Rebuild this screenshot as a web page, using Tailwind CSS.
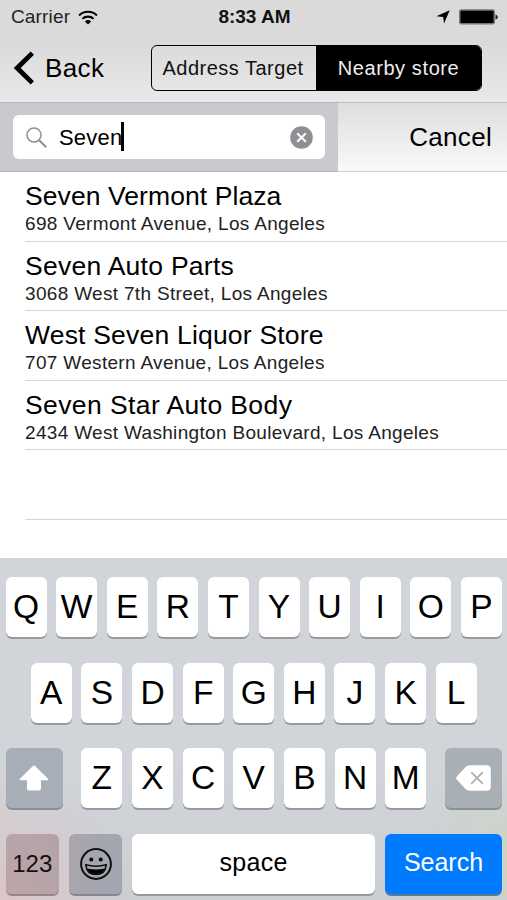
<!DOCTYPE html>
<html lang="en">
<head>
    <meta charset="UTF-8">
    <meta name="viewport" content="width=device-width, initial-scale=1.0">
    <title>Nearby store</title>
    <!-- Tailwind CSS -->
    <script src="https://cdn.jsdelivr.net/npm/@tailwindcss/browser@4"></script>
</head>
<body class="bg-white text-black h-[900px] w-[507px] overflow-hidden flex flex-col whitespace-nowrap font-['Liberation_Sans',Arial,sans-serif]">
<!-- HEADER -->
<header class="h-[102px] shrink-0 bg-linear-to-b from-[#dadada] from-40% to-[#e9e9ea]">
    <!-- Status bar -->
    <div class="h-[34px] grid grid-cols-3 items-center pl-[11px] pr-[9px] text-[19px]">
        <div class="flex items-center gap-[8px]">
            <span class="text-[#222] tracking-[0.15px]">Carrier</span>
            <svg class="w-[20px] h-[15px]" viewBox="0 0 20 15" fill="none" stroke="#000" stroke-width="2.1">
                <path d="M1.1 5.4a12.8 12.8 0 0 1 17.8 0"/>
                <path d="M4.4 8.8a8.2 8.2 0 0 1 11.2 0"/>
                <path d="M10 14.6L6.9 11.5a4.5 4.5 0 0 1 6.2 0z" fill="#000" stroke="none"/>
            </svg>
        </div>
        <span class="text-center font-bold text-[19px] text-[#111]">8:33 AM</span>
        <div class="flex items-center justify-end gap-[9px]">
            <svg class="w-[14px] h-[14px]" viewBox="0 0 14 14"><path d="M13.7 .3L8 13.6 7.2 6.9 .4 6.3z"/></svg>
            <svg class="w-[39px] h-[16px]" viewBox="0 0 39 16">
                <rect x=".75" y="1" width="34.5" height="13.8" rx="1.5" fill="#000" stroke="#777" stroke-width="1.5"/>
                <path d="M36.5 5.4q2.3 .6 2.3 2.6t-2.3 2.6z" fill="#222"/>
            </svg>
        </div>
    </div>
    <!-- Navigation -->
    <div class="h-[68px] flex items-center pl-[14px] pr-[25px]">
        <button class="flex items-center gap-[10px]">
            <svg class="w-[21px] h-[34px]" viewBox="0 0 21 34" fill="none" stroke="#000" stroke-width="4.8"><path d="M18.3 2.1L3.2 17l15.1 14.9"/></svg>
            <span class="text-[26px] leading-none tracking-[0.4px]">Back</span>
        </button>
        <div class="ml-auto flex w-[331px] h-[46px] rounded-[6px] border-[1.5px] border-black overflow-hidden text-[20px]">
            <button class="w-[164px] pr-[2px] tracking-[0.5px] text-[#111]">Address Target</button>
            <button class="flex-1 bg-black text-[#eee] tracking-[0.6px]">Nearby store</button>
        </div>
    </div>
</header>

<!-- SEARCH -->
<section class="h-[70px] shrink-0 flex">
    <div class="w-[338px] bg-[#c9c9ce] border-y border-[#b4b4b8] pl-[13px] pt-[12px]">
        <div class="w-[312px] h-[44px] bg-white rounded-[6px] flex items-center pl-[13px] pr-[12px]">
            <svg class="w-[21px] h-[21px]" viewBox="0 0 21 21" fill="none" stroke="#8e8e93"><circle cx="8" cy="8" r="7" stroke-width="1.5"/><path d="M13.2 13.2l7 7" stroke-width="2"/></svg>
            <span class="ml-[12px] text-[22px] tracking-[0.2px]">Seven</span>
            <span class="w-[3px] h-[29px] -ml-[1px] -mt-[2px] bg-black"></span>
            <svg class="ml-auto w-[23px] h-[23px]" viewBox="0 0 23 23"><circle cx="11.5" cy="11.5" r="11.3" fill="#8e8e93"/><path d="M7.2 7.2l8.6 8.6m0-8.6l-8.6 8.6" stroke="#fff" stroke-width="2.1"/></svg>
        </div>
    </div>
    <div class="flex-1 bg-linear-to-b from-[#dedede] to-[#f9f9f9] border-t border-b border-t-[#bbb] border-b-[#d0d0d0] flex items-center justify-end pr-[15px]">
        <button class="text-[26px] tracking-[0.3px]">Cancel</button>
    </div>
</section>

<!-- RESULTS -->
<main class="h-[386px] shrink-0 pl-[25px]">
    <div class="h-[69.5px] border-b border-[#d5d5d7] pt-[8px]">
        <h2 class="text-[26.5px] leading-[32px] tracking-[0.08px]">Seven Vermont Plaza</h2>
        <p class="text-[19px] leading-[24px] text-[#222] tracking-[0.32px]">698 Vermont Avenue, Los Angeles</p>
    </div>
    <div class="h-[69.5px] border-b border-[#d5d5d7] pt-[8px]">
        <h2 class="text-[26.5px] leading-[32px] tracking-[0.27px]">Seven Auto Parts</h2>
        <p class="text-[19px] leading-[24px] text-[#222] tracking-[0.32px]">3068 West 7th Street, Los Angeles</p>
    </div>
    <div class="h-[69.5px] border-b border-[#d5d5d7] pt-[8px]">
        <h2 class="text-[26.5px] leading-[32px] tracking-[0.2px]">West Seven Liquor Store</h2>
        <p class="text-[19px] leading-[24px] text-[#222] tracking-[0.32px]">707 Western Avenue, Los Angeles</p>
    </div>
    <div class="h-[69.5px] border-b border-[#d5d5d7] pt-[8px]">
        <h2 class="text-[26.5px] leading-[32px] tracking-[0.4px]">Seven Star Auto Body</h2>
        <p class="text-[19px] leading-[24px] text-[#222] tracking-[0.32px]">2434 West Washington Boulevard, Los Angeles</p>
    </div>
    <div class="h-[69.5px] border-b border-[#d5d5d7]"></div>
</main>

<!-- KEYBOARD -->
<footer class="flex-1 bg-[#d1d4d9] bg-[radial-gradient(circle_at_0%_100%,#dcc6c9_0,#dcc6c900_130px),radial-gradient(circle_at_100%_88%,#ccd5c8_0,#ccd5c800_90px),linear-gradient(#d1d4d9_60%,#cbced3)] pl-[5.5px] pr-[5px] pt-[19px] flex flex-col gap-[25.7px] text-[33.5px]">
    <div class="flex justify-between h-[60px]">
        <button class="w-[41px] rounded-[6px] bg-white shadow-[0_2px_0_#989a9e]">Q</button>
        <button class="w-[41px] rounded-[6px] bg-white shadow-[0_2px_0_#989a9e]">W</button>
        <button class="w-[41px] rounded-[6px] bg-white shadow-[0_2px_0_#989a9e]">E</button>
        <button class="w-[41px] rounded-[6px] bg-white shadow-[0_2px_0_#989a9e]">R</button>
        <button class="w-[41px] rounded-[6px] bg-white shadow-[0_2px_0_#989a9e]">T</button>
        <button class="w-[41px] rounded-[6px] bg-white shadow-[0_2px_0_#989a9e]">Y</button>
        <button class="w-[41px] rounded-[6px] bg-white shadow-[0_2px_0_#989a9e]">U</button>
        <button class="w-[41px] rounded-[6px] bg-white shadow-[0_2px_0_#989a9e]">I</button>
        <button class="w-[41px] rounded-[6px] bg-white shadow-[0_2px_0_#989a9e]">O</button>
        <button class="w-[41px] rounded-[6px] bg-white shadow-[0_2px_0_#989a9e]">P</button>
    </div>
    <div class="flex justify-between h-[60px] px-[25.3px]">
        <button class="w-[41px] rounded-[6px] bg-white shadow-[0_2px_0_#989a9e]">A</button>
        <button class="w-[41px] rounded-[6px] bg-white shadow-[0_2px_0_#989a9e]">S</button>
        <button class="w-[41px] rounded-[6px] bg-white shadow-[0_2px_0_#989a9e]">D</button>
        <button class="w-[41px] rounded-[6px] bg-white shadow-[0_2px_0_#989a9e]">F</button>
        <button class="w-[41px] rounded-[6px] bg-white shadow-[0_2px_0_#989a9e]">G</button>
        <button class="w-[41px] rounded-[6px] bg-white shadow-[0_2px_0_#989a9e]">H</button>
        <button class="w-[41px] rounded-[6px] bg-white shadow-[0_2px_0_#989a9e]">J</button>
        <button class="w-[41px] rounded-[6px] bg-white shadow-[0_2px_0_#989a9e]">K</button>
        <button class="w-[41px] rounded-[6px] bg-white shadow-[0_2px_0_#989a9e]">L</button>
    </div>
    <div class="flex justify-between h-[60px]">
        <!-- Shift -->
        <button class="w-[57px] rounded-[6px] bg-[#a7aeb8] shadow-[0_2px_0_#8b8f96] flex items-center justify-center">
            <svg class="w-[30px] h-[26px]" viewBox="0 0 30 26" fill="#fff"><path d="M14.2 .8q.8-.7 1.6 0L29.3 14q.6 1-.6 1.2H22v8.6q0 1.8-1.8 1.8H9.8q-1.8 0-1.8-1.8v-8.6H1.3Q.1 15 .7 14z"/></svg>
        </button>
        <div class="w-[345px] flex justify-between">
            <button class="w-[41px] rounded-[6px] bg-white shadow-[0_2px_0_#989a9e]">Z</button>
            <button class="w-[41px] rounded-[6px] bg-white shadow-[0_2px_0_#989a9e]">X</button>
            <button class="w-[41px] rounded-[6px] bg-white shadow-[0_2px_0_#989a9e]">C</button>
            <button class="w-[41px] rounded-[6px] bg-white shadow-[0_2px_0_#989a9e]">V</button>
            <button class="w-[41px] rounded-[6px] bg-white shadow-[0_2px_0_#989a9e]">B</button>
            <button class="w-[41px] rounded-[6px] bg-white shadow-[0_2px_0_#989a9e]">N</button>
            <button class="w-[41px] rounded-[6px] bg-white shadow-[0_2px_0_#989a9e]">M</button>
        </div>
        <!-- Delete -->
        <button class="w-[57px] rounded-[6px] bg-[#a8afb5] shadow-[0_2px_0_#8b9094] flex items-center justify-center">
            <svg class="w-[35px] h-[26px]" viewBox="0 0 35 26"><path d="M.6 14.2q-.9-1.2 0-2.4L9.5 2Q11.3 .2 13.5 .2H30.5Q34.8 .2 34.8 4.5v17q0 4.3-4.3 4.3h-17q-2.2 0-4-1.8z" fill="#fff"/><path d="M15.2 7.2l11.6 11.6m0-11.6L15.2 18.8" stroke="#a8afb5" stroke-width="1.7"/></svg>
        </button>
    </div>
    <div class="flex justify-between h-[60px] text-[24px]">
        <button class="w-[53.5px] rounded-[6px] bg-linear-to-tr from-[#bda5a8] to-[#b2a3a8] shadow-[0_2px_0_#938689] text-[#111]">123</button>
        <button class="w-[53.5px] rounded-[6px] bg-linear-to-r from-[#a9a5ac] to-[#a0a7b2] shadow-[0_2px_0_#84878e] flex items-center justify-center">
            <svg class="w-[32px] h-[32px]" viewBox="0 0 32 32"><circle cx="16" cy="16" r="14.9" fill="none" stroke="#111" stroke-width="2"/><circle cx="11.3" cy="11.5" r="2"/><circle cx="20.7" cy="11.5" r="2"/><path d="M5.8 16.8q10.2 2.800 20.4 0-1 9.7-10.2 9.7T5.8 16.8z" fill="none" stroke="#111" stroke-width="1.6"/><path d="M7.2 20.5q8.8 2.2 17.6 0-2.2 5.7-8.8 5.7t-8.8-5.7z"/></svg>
        </button>
        <button class="w-[243px] rounded-[6px] bg-white shadow-[0_2px_0_#989a9e] text-[25px] pb-[2px] tracking-[0.3px]">space</button>
        <button class="w-[117px] rounded-[6px] bg-[#007aff] shadow-[0_2px_0_#5c7a9c] text-white text-[25px] pb-[2px]">Search</button>
    </div>
</footer>
</body>
</html>
